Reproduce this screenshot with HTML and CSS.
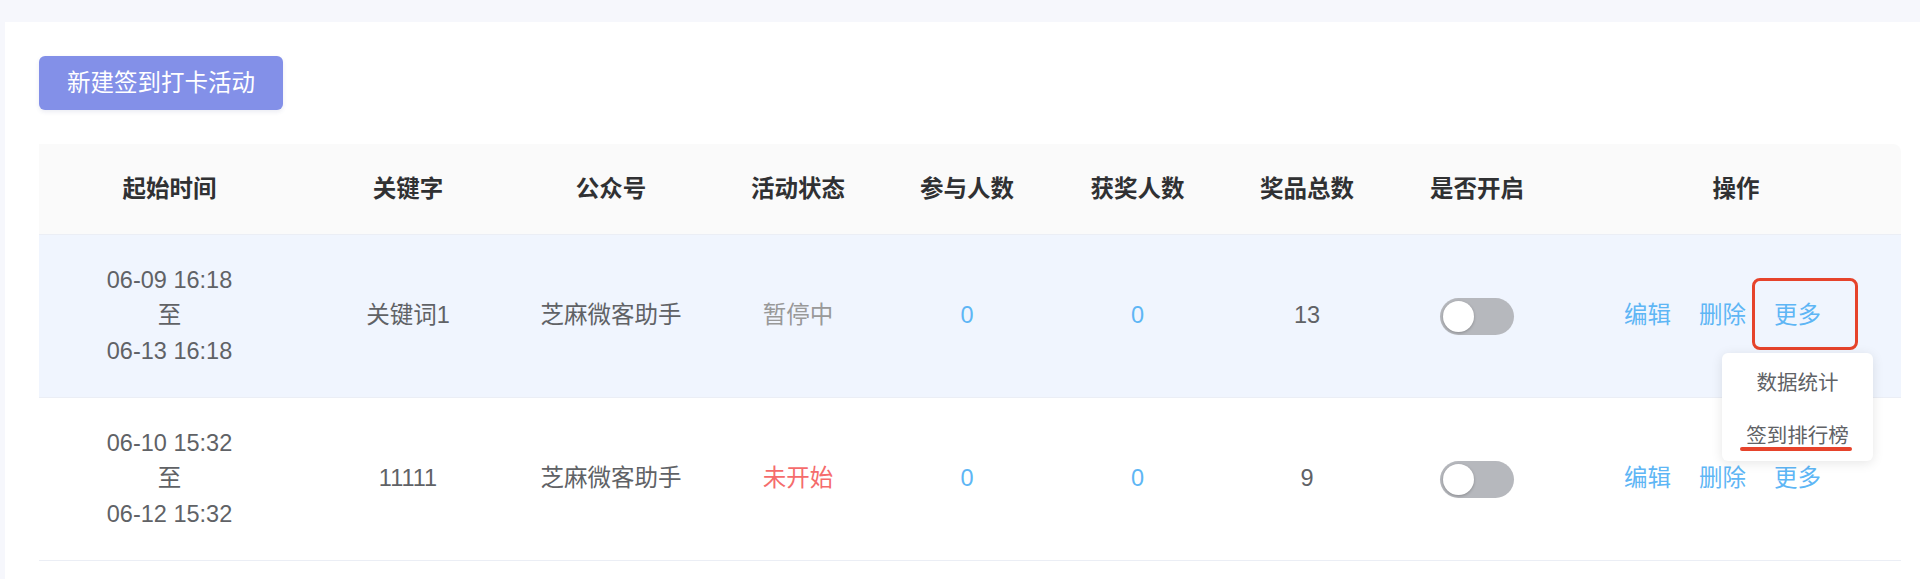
FILE: index.html
```html
<!DOCTYPE html>
<html lang="zh-CN">
<head>
<meta charset="utf-8">
<title>签到打卡活动</title>
<link rel="stylesheet" href="styles.css">
</head>
<body>
<div class="page">
  <div class="card">
    <button class="btn-primary" type="button">新建签到打卡活动</button>
    <table class="data-table">
      <colgroup>
        <col class="col-time">
        <col class="col-key">
        <col class="col-account">
        <col class="col-status">
        <col class="col-join">
        <col class="col-win">
        <col class="col-prize">
        <col class="col-open">
        <col class="col-ops">
      </colgroup>
      <thead>
        <tr>
          <th>起始时间</th>
          <th>关键字</th>
          <th>公众号</th>
          <th>活动状态</th>
          <th>参与人数</th>
          <th>获奖人数</th>
          <th>奖品总数</th>
          <th>是否开启</th>
          <th class="th-ops">操作</th>
        </tr>
      </thead>
      <tbody>
        <tr class="row-hover">
          <td><div class="date">06-09 16:18<br>至<br>06-13 16:18</div></td>
          <td>关键词1</td>
          <td>芝麻微客助手</td>
          <td class="st-paused">暂停中</td>
          <td class="num-link">0</td>
          <td class="num-link">0</td>
          <td>13</td>
          <td><span class="switch"></span></td>
          <td class="ops"><span class="link">编辑</span><span class="link">删除</span><span class="link">更多</span></td>
        </tr>
        <tr>
          <td><div class="date">06-10 15:32<br>至<br>06-12 15:32</div></td>
          <td>11111</td>
          <td>芝麻微客助手</td>
          <td class="st-pending">未开始</td>
          <td class="num-link">0</td>
          <td class="num-link">0</td>
          <td>9</td>
          <td><span class="switch"></span></td>
          <td class="ops"><span class="link">编辑</span><span class="link">删除</span><span class="link">更多</span></td>
        </tr>
      </tbody>
    </table>
    <div class="annot-box"></div>
    <ul class="dropdown">
      <li>数据统计</li>
      <li>签到排行榜</li>
    </ul>
    <div class="annot-line"></div>
  </div>
</div>
</body>
</html>
```
FILE: styles.css
```css
* { box-sizing: border-box; }
html, body {
  margin: 0;
  padding: 0;
  background: #f6f7fc;
  font-family: "Liberation Sans", "Noto Sans CJK SC", sans-serif;
  color: #606266;
  overflow: hidden;
}
.page {
  padding: 22px 0 0 5px;
  height: 579px;
}
.card {
  position: relative;
  background: #ffffff;
  padding: 34px 19px 19px 34px;
  min-height: 600px;
}
.btn-primary {
  display: block;
  width: 244px;
  height: 54px;
  border: none;
  border-radius: 6px;
  background: #8390e8;
  color: #ffffff;
  font-family: "Liberation Sans", "Noto Sans CJK SC", sans-serif;
  font-size: 23.5px;
  line-height: 54px;
  padding: 0;
  box-shadow: 0 2px 4px rgba(60, 70, 140, 0.10);
  margin: 0 0 34px 0;
  cursor: pointer;
}
.data-table {
  width: 1862px;
  table-layout: fixed;
  border-collapse: separate;
  border-spacing: 0;
  font-size: 23.5px;
}
.col-time { width: 261px; }
.col-key { width: 216px; }
.col-account { width: 190px; }
.col-status { width: 184px; }
.col-join { width: 154px; }
.col-win { width: 187px; }
.col-prize { width: 152px; }
.col-open { width: 188px; }
.col-ops { width: 330px; }

.data-table th {
  height: 91px;
  padding: 0;
  background: #fafafa;
  border-bottom: 1px solid #ebeef5;
  color: #303133;
  font-weight: 600;
  text-align: center;
  vertical-align: middle;
  line-height: 30px;
}
.data-table th.th-ops {
  border-top-right-radius: 8px;
}
.data-table td {
  height: 163px;
  padding: 0;
  border-bottom: 1px solid #ebeef5;
  text-align: center;
  vertical-align: middle;
  line-height: 35.5px;
  color: #606266;
}
.row-hover td {
  background: #f0f5fe;
}
.date {
  line-height: 35.5px;
}
.st-paused { color: #999999 !important; }
.st-pending { color: #f56c6c !important; }
.num-link { color: #5eb6f5 !important; }

.switch {
  position: relative;
  display: inline-block;
  vertical-align: middle;
  width: 74px;
  height: 37px;
  border-radius: 19px;
  background: #b6b8bd;
}
.switch::after {
  content: "";
  position: absolute;
  left: 3px;
  top: 3px;
  width: 31px;
  height: 31px;
  border-radius: 50%;
  background: #ffffff;
  box-shadow: 0 1px 3px rgba(0, 0, 0, 0.25);
}
.ops {
  padding-right: 27px !important;
}
.link {
  color: #5eb6f5;
  margin: 0 14px;
  cursor: pointer;
}

.annot-box {
  position: absolute;
  left: 1747px;
  top: 256px;
  width: 106px;
  height: 72px;
  border: 3.5px solid #e6432b;
  border-radius: 8px;
}
.dropdown {
  position: absolute;
  left: 1717px;
  top: 331px;
  width: 151px;
  height: 108px;
  margin: 0;
  padding: 3px 0;
  list-style: none;
  background: #ffffff;
  border-radius: 6px;
  box-shadow: 0 2px 12px rgba(0, 0, 0, 0.10);
}
.dropdown li {
  height: 53px;
  line-height: 53px;
  text-align: center;
  font-size: 20.5px;
  color: #606266;
}
.annot-line {
  position: absolute;
  left: 1735px;
  top: 425px;
  width: 112px;
  height: 4px;
  border-radius: 2px;
  background: #e6432b;
}
```
